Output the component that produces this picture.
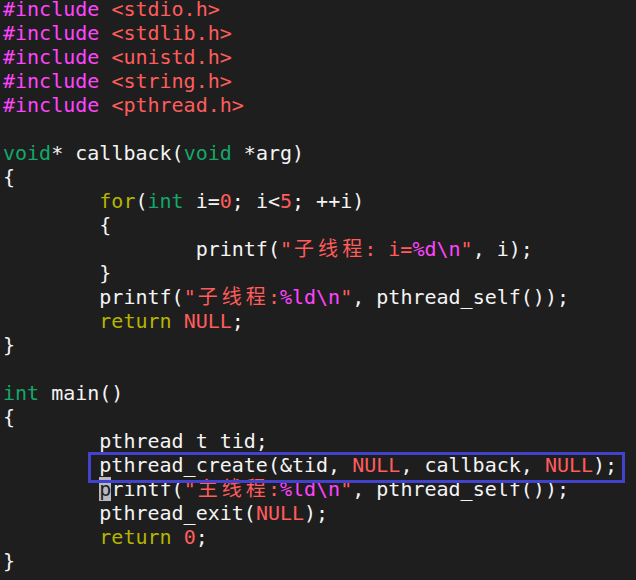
const mono = "font-['DejaVu_Sans_Mono','Noto_Sans_CJK_SC',monospace]";

const G: React.FC<{ children: React.ReactNode }> = ({ children }) => (
  <span className="text-[#13a86a]">{children}</span>
);
const Y: React.FC<{ children: React.ReactNode }> = ({ children }) => (
  <span className="text-[#b5b500]">{children}</span>
);
const P: React.FC<{ children: React.ReactNode }> = ({ children }) => (
  <span className="text-[#ff44ff]">{children}</span>
);
const R: React.FC<{ children: React.ReactNode }> = ({ children }) => (
  <span className="text-[#ff5c5c]">{children}</span>
);

// CJK glyphs take two cells in the terminal
const Wide: React.FC<{ text: string }> = ({ text }) => (
  <>
    {text.split('').map((ch, i) => (
      <span key={i} className="inline-block w-[2ch] text-center text-[#ff5c5c]">
        {ch}
      </span>
    ))}
  </>
);

const Line: React.FC<{ children?: React.ReactNode }> = ({ children }) => (
  <div className="h-[24px] leading-[24px] whitespace-pre">{children ?? ' '}</div>
);

const T1 = '        ';
const T2 = '                ';

export default function App() {
  return (
    <div className={`relative w-[636px] h-[580px] overflow-hidden bg-[#1e1e1e] text-[#f4f4f4] text-[20px] ${mono}`}>
      <div className="-mt-[3px] pl-[3px]">
        <Line><P>#include</P> <R>&lt;stdio.h&gt;</R></Line>
        <Line><P>#include</P> <R>&lt;stdlib.h&gt;</R></Line>
        <Line><P>#include</P> <R>&lt;unistd.h&gt;</R></Line>
        <Line><P>#include</P> <R>&lt;string.h&gt;</R></Line>
        <Line><P>#include</P> <R>&lt;pthread.h&gt;</R></Line>
        <Line />
        <Line><G>void</G>* callback(<G>void</G> *arg)</Line>
        <Line>{'{'}</Line>
        <Line>{T1}<Y>for</Y>(<G>int</G> i=<R>0</R>; i&lt;<R>5</R>; ++i)</Line>
        <Line>{T1}{'{'}</Line>
        <Line>
          {T2}printf(<R>"</R><Wide text="子线程" /><R>: i=</R><P>%d\n</P><R>"</R>, i);
        </Line>
        <Line>{T1}{'}'}</Line>
        <Line>
          {T1}printf(<R>"</R><Wide text="子线程" /><R>:</R><P>%ld\n</P><R>"</R>, pthread_self());
        </Line>
        <Line>{T1}<Y>return</Y> <R>NULL</R>;</Line>
        <Line>{'}'}</Line>
        <Line />
        <Line><G>int</G> main()</Line>
        <Line>{'{'}</Line>
        <Line>{T1}pthread_t tid;</Line>
        <Line>{T1}pthread_create(&amp;tid, <R>NULL</R>, callback, <R>NULL</R>);</Line>
        <Line>
          {T1}<span className="bg-[#b8b8c0] text-[#1e1e1e]">p</span>rintf(<R>"</R><Wide text="主线程" /><R>:</R><P>%ld\n</P><R>"</R>, pthread_self());
        </Line>
        <Line>{T1}pthread_exit(<R>NULL</R>);</Line>
        <Line>{T1}<Y>return</Y> <R>0</R>;</Line>
        <Line>{'}'}</Line>
      </div>
      <div className="absolute left-[88px] top-[452px] w-[537px] h-[31px] border-[3px] border-[#4242cc]" />
    </div>
  );
}
